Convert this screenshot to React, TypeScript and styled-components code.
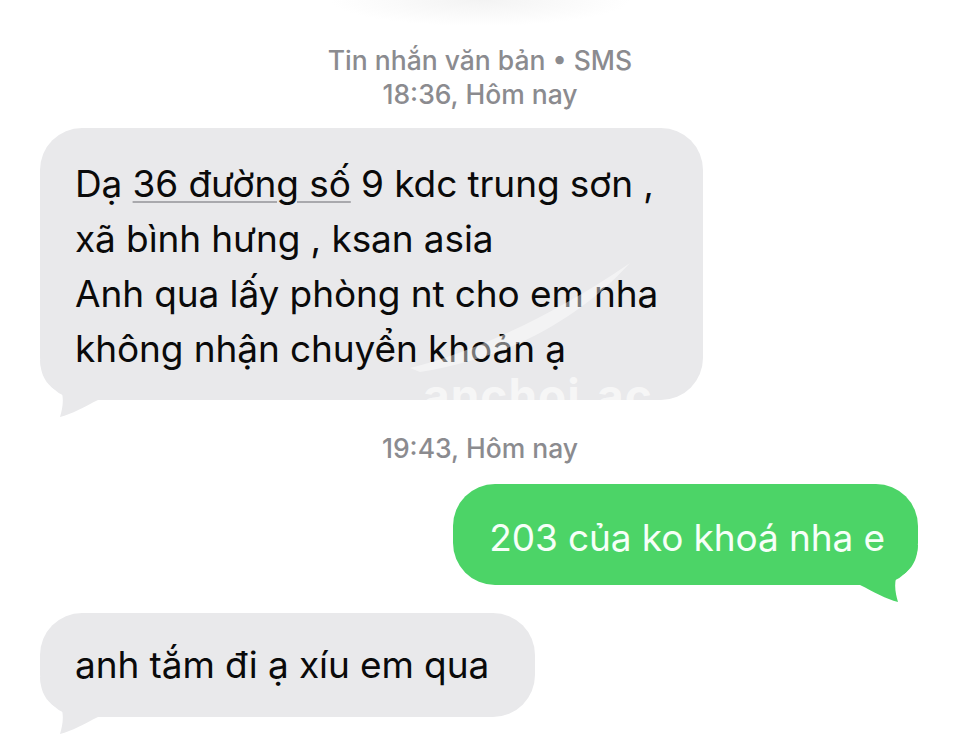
import React from "react";
import styled, { createGlobalStyle } from "styled-components";

const Global = createGlobalStyle`
  html, body { margin: 0; padding: 0; background: #ffffff; }
  body { font-family: "Inter", "Noto Sans", sans-serif; }
`;

const Page = styled.div`
  position: relative;
  width: 960px;
  height: 739px;
  overflow: hidden;
  background:
    radial-gradient(ellipse 150px 26px at 480px 0px, #f3f3f3, rgba(255,255,255,0) 100%),
    #ffffff;
  display: flex;
  flex-direction: column;
  padding: 43px 40px 0 40px;
  box-sizing: border-box;
  font-family: "Inter", "Noto Sans", sans-serif;
`;

const Stamp = styled.div<{ $top?: number; $bottom?: number }>`
  text-align: center;
  color: #8b8b8f;
  font-size: 26.5px;
  line-height: 34px;
  font-weight: 500;
  margin-top: ${(p) => p.$top ?? 0}px;
  margin-bottom: ${(p) => p.$bottom ?? 0}px;
`;

const Row = styled.div<{ $out?: boolean; $top?: number }>`
  display: flex;
  justify-content: ${(p) => (p.$out ? "flex-end" : "flex-start")};
  margin-top: ${(p) => p.$top ?? 0}px;
  padding-right: ${(p) => (p.$out ? 2 : 0)}px;
`;

const Bubble = styled.div<{ $out?: boolean; $w?: number; $pad: string }>`
  position: relative;
  background: ${(p) => (p.$out ? "#4cd467" : "#e9e9eb")};
  color: ${(p) => (p.$out ? "#f6fff8" : "#0a0a0a")};
  border-radius: 42px;
  font-size: 37px;
  line-height: 55px;
  letter-spacing: -0.1px;
  width: ${(p) => (p.$w ? `${p.$w}px` : "auto")};
  box-sizing: border-box;
  padding: ${(p) => p.$pad};
`;

const Line = styled.div`
  position: relative;
  z-index: 1;
  white-space: nowrap;
`;

const Link = styled.span`
  text-decoration: underline;
  text-decoration-color: #a9a9ad;
  text-decoration-thickness: 2px;
  text-underline-offset: 4px;
`;

const TailSvg = styled.svg<{ $out?: boolean }>`
  position: absolute;
  z-index: 0;
  bottom: -20px;
  width: 60px;
  height: 60px;
  ${(p) => (p.$out ? "right: 0; transform: scaleX(-1);" : "left: 0;")}
`;

const Watermark = styled.div`
  position: absolute;
  z-index: 2;
  left: 383px;
  top: 240px;
  font-size: 46px;
  font-weight: 700;
  color: rgba(255, 255, 255, 0.6);
  letter-spacing: 1px;
  pointer-events: none;
`;

const Swoosh = styled.svg`
  position: absolute;
  z-index: 2;
  left: 340px;
  top: 130px;
  width: 260px;
  height: 120px;
  pointer-events: none;
`;

function Tail({ out }: { out?: boolean }) {
  return (
    <TailSvg $out={out} viewBox="0 -40 60 60">
      <path
        d="M0 -42 C0 -22 9 -12 22 -7 C24 2 22 10 20 17 C32 14 44 7 58 0 L60 0 L60 -42 Z"
        fill={out ? "#4cd467" : "#e9e9eb"}
      />
    </TailSvg>
  );
}

export default function App() {
  return (
    <>
      <Global />
      <Page>
        <Stamp>Tin nhắn văn bản • SMS</Stamp>
        <Stamp $bottom={17}>18:36, Hôm nay</Stamp>

        <Row>
          <Bubble $w={663} $pad="28px 30px 24px 35px">
            <Line>
              Dạ <Link>36 đường số</Link> 9 kdc trung sơn ,
            </Line>
            <Line>xã bình hưng , ksan asia</Line>
            <Line>Anh qua lấy phòng nt cho em nha</Line>
            <Line>không nhận chuyển khoản ạ</Line>
            <Swoosh viewBox="0 0 260 120">
              <path
                d="M30 110 C90 95 170 60 250 5 C200 60 130 100 40 114 Z"
                fill="rgba(255,255,255,0.45)"
              />
            </Swoosh>
            <Watermark>anchoi.ac</Watermark>
            <Tail />
          </Bubble>
        </Row>

        <Stamp $top={31}>19:43, Hôm nay</Stamp>

        <Row $out $top={19}>
          <Bubble $out $pad="26px 33px 20px 36px">
            <Line>203 của ko khoá nha e</Line>
            <Tail out />
          </Bubble>
        </Row>

        <Row $top={28}>
          <Bubble $pad="24px 46px 25px 35px">
            <Line>anh tắm đi ạ xíu em qua</Line>
            <Tail />
          </Bubble>
        </Row>
      </Page>
    </>
  );
}
